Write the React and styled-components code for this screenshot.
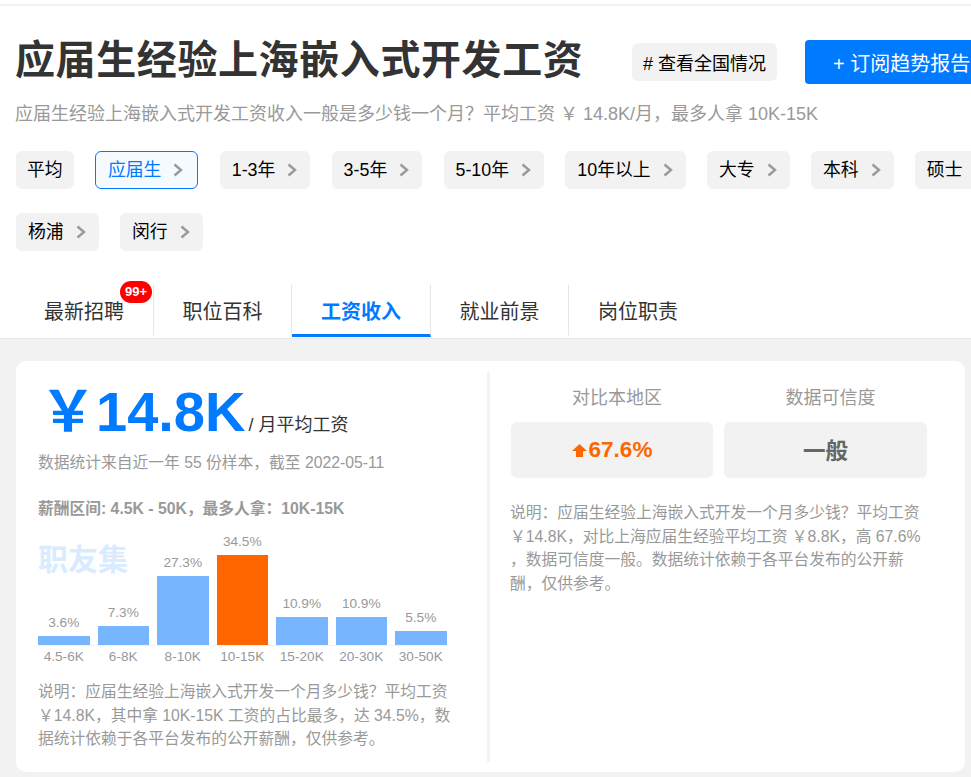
import React from "react";
import styled, { createGlobalStyle } from "styled-components";

const Global = createGlobalStyle`
  html, body {
    margin: 0;
    padding: 0;
    background: #fff;
    overflow: hidden;
    font-family: "Liberation Sans", "Noto Sans CJK SC", sans-serif;
  }
  * { box-sizing: border-box; }
`;

const Page = styled.div`
  width: 971px;
  height: 777px;
  overflow: hidden;
`;

const Header = styled.div`
  width: 1060px;
  height: 338px;
  padding: 4px 0 0 16px;
  background: #fff;
`;

const TopLine = styled.div`
  height: 2px;
  margin-left: -16px;
  background: #f2f2f2;
`;

const TitleRow = styled.div`
  display: flex;
  align-items: center;
  margin-top: 24px;
  height: 60px;
`;

const Title = styled.h1`
  margin: 0 0 0 -1px;
  width: 617px;
  font-size: 40px;
  line-height: 60px;
  font-weight: 700;
  letter-spacing: 0.6px;
  color: #333;
  white-space: nowrap;
`;

const AllLink = styled.a`
  display: flex;
  align-items: center;
  justify-content: center;
  width: 145px;
  height: 38px;
  margin-top: 4px;
  border-radius: 6px;
  background: #f2f2f2;
  color: #000;
  font-size: 18px;
`;

const SubButton = styled.a`
  display: flex;
  align-items: center;
  width: 190px;
  height: 44px;
  margin-left: 28px;
  margin-top: 4px;
  padding-left: 28px;
  border-radius: 4px;
  background: #007aff;
  color: #fff;
  font-size: 20px;
  white-space: nowrap;
`;

const Desc = styled.p`
  margin: 12px 0 0 -1px;
  font-size: 18px;
  line-height: 24px;
  color: #999;
  white-space: nowrap;
`;

const Filters = styled.div`
  display: flex;
  flex-wrap: wrap;
  gap: 24px 21.25px;
  margin-top: 25px;
  width: 1030px;
`;

const Chip = styled.a`
  display: flex;
  align-items: center;
  gap: 12px;
  height: 38px;
  padding: 0 ${(p) => (p.$plain ? 10 : p.$active ? 14 : 12)}px 0 ${(p) => (p.$plain ? 10 : p.$active ? 12 : 11)}px;
  border-radius: 6px;
  border: 1px solid ${(p) => (p.$active ? "#007aff" : "#f2f2f2")};
  background: ${(p) => (p.$active ? "#f5faff" : "#f2f2f2")};
  color: ${(p) => (p.$active ? "#007aff" : "#000")};
  font-size: 17.85px;
  white-space: nowrap;
`;

const ChipText = styled.span`
  margin-bottom: 5px;
`;

const Chevron = () => (
  <svg width="10" height="14" viewBox="0 0 10 14">
    <path d="M1.5 1.5L8 7l-6.5 5.5" fill="none" stroke="#999" strokeWidth="2.4" />
  </svg>
);

const Tabs = styled.div`
  display: flex;
  height: 52px;
  margin: 34px 0 0 -16px;
`;

const Tab = styled.a`
  position: relative;
  display: flex;
  align-items: center;
  justify-content: center;
  width: ${(p) => p.$w}px;
  padding: 1px 0 0 ${(p) => p.$pad || 0}px;
  border-right: 1px solid #e6e6e6;
  border-bottom: 3px solid ${(p) => (p.$active ? "#007aff" : "transparent")};
  color: ${(p) => (p.$active ? "#007aff" : "#333")};
  font-size: 20px;
  font-weight: ${(p) => (p.$active ? 700 : 400)};
  &:last-child { border-right: 0; }
`;

const Badge = styled.span`
  position: absolute;
  top: -4px;
  left: 120px;
  width: 32px;
  height: 22px;
  border-radius: 11px;
  background: #f00;
  color: #fff;
  font-size: 13px;
  font-weight: 700;
  line-height: 22px;
  text-align: center;
`;

const Body = styled.div`
  height: 439px;
  padding: 22px 6px 0 16px;
  background: #f2f2f2;
  border-top: 1px solid #e8e8e8;
`;

const Card = styled.div`
  display: flex;
  height: 411px;
  padding: 11px 0;
  border-radius: 10px;
  background: #fff;
`;

const Left = styled.div`
  position: relative;
  width: 474px;
  height: 390px;
  padding-left: 22px;
  border-right: 3px solid #f2f2f2;
`;

const Price = styled.div`
  display: flex;
  align-items: baseline;
  height: 70px;
  padding: 10px 0 0 2px;
`;

const Amount = styled.span`
  font-size: 56px;
  line-height: 60px;
  font-weight: 700;
  color: #007aff;
  white-space: nowrap;
`;

const Unit = styled.span`
  margin-left: 3px;
  font-size: 18px;
  color: #333;
`;

const Note = styled.p`
  margin: 9px 0 0;
  font-size: 15.75px;
  line-height: 24px;
  color: #999;
`;

const Range = styled.p`
  margin: 22px 0 0;
  font-size: 15.75px;
  line-height: 24px;
  font-weight: 700;
  color: #999;
`;

const Watermark = styled.div`
  position: absolute;
  left: 22px;
  top: 166px;
  font-size: 30px;
  line-height: 44px;
  font-weight: 700;
  color: #d9ebff;
`;

const Chart = styled.div`
  display: flex;
  align-items: flex-end;
  gap: 8px;
  width: 409px;
  height: 113px;
  margin-top: 12px;
  border-bottom: 1px solid #f2f2f2;
`;

const Col = styled.div`
  display: flex;
  flex-direction: column;
  align-items: center;
  width: 51.5px;
`;

const Pct = styled.span`
  font-size: 13.65px;
  line-height: 16px;
  margin-bottom: 5px;
  color: #999;
  white-space: nowrap;
`;

const Bar = styled.div`
  width: 100%;
  background: ${(p) => (p.$hot ? "#f60" : "#77b6ff")};
`;

const Axis = styled.div`
  display: flex;
  gap: 8px;
  width: 409px;
  margin-top: 2px;
`;

const AxisLabel = styled.span`
  width: 51.5px;
  font-size: 13.65px;
  line-height: 18px;
  color: #999;
  text-align: center;
  white-space: nowrap;
`;

const Explain = styled.p`
  width: ${(p) => p.$w}px;
  margin: ${(p) => p.$top}px 0 0;
  font-size: 15.75px;
  line-height: 23.7px;
  color: #999;
`;

const Right = styled.div`
  padding: 13px 0 0 21px;
`;

const Stats = styled.div`
  display: grid;
  grid-template-columns: 202px 203px;
  column-gap: 11px;
`;

const StatLabel = styled.div`
  padding-left: 10px;
  font-size: 18px;
  line-height: 26px;
  color: #999;
  text-align: center;
`;

const StatBox = styled.div`
  display: flex;
  align-items: center;
  justify-content: center;
  gap: 2px;
  height: 56px;
  margin-top: 11px;
  padding-bottom: ${(p) => (p.$cjk ? 3 : 0)}px;
  border-radius: 6px;
  background: #f2f2f2;
  color: ${(p) => p.$color};
  font-size: 22.5px;
  font-weight: 700;
`;

const ExplainRight = styled(Explain)`
  margin-left: -1px;
`;

const bars = [
  ["4.5-6K", 3.6, 9],
  ["6-8K", 7.3, 19],
  ["8-10K", 27.3, 69],
  ["10-15K", 34.5, 90],
  ["15-20K", 10.9, 28],
  ["20-30K", 10.9, 28],
  ["30-50K", 5.5, 14],
];

const filters = ["应届生", "1-3年", "3-5年", "5-10年", "10年以上", "大专", "本科", "硕士", "杨浦", "闵行"];

export default function App() {
  return (
    <Page>
      <Global />
      <Header>
        <TopLine />
        <TitleRow>
          <Title>应届生经验上海嵌入式开发工资</Title>
          <AllLink># 查看全国情况</AllLink>
          <SubButton>+ 订阅趋势报告</SubButton>
        </TitleRow>
        <Desc>应届生经验上海嵌入式开发工资收入一般是多少钱一个月？平均工资 ￥ 14.8K/月，最多人拿 10K-15K</Desc>
        <Filters>
          <Chip $plain><ChipText>平均</ChipText></Chip>
          {filters.map((f, i) => (
            <Chip key={f} $active={i === 0}>
              <ChipText>{f}</ChipText>
              <Chevron />
            </Chip>
          ))}
        </Filters>
        <Tabs>
          <Tab $w={154} $pad={15}>
            最新招聘
            <Badge>99+</Badge>
          </Tab>
          <Tab $w={138}>职位百科</Tab>
          <Tab $w={139} $active>工资收入</Tab>
          <Tab $w={138}>就业前景</Tab>
          <Tab $w={138}>岗位职责</Tab>
        </Tabs>
      </Header>
      <Body>
        <Card>
          <Left>
            <Price>
              <Amount>￥14.8K</Amount>
              <Unit>/ 月平均工资</Unit>
            </Price>
            <Note>数据统计来自近一年 55 份样本，截至 2022-05-11</Note>
            <Range>薪酬区间: 4.5K - 50K，最多人拿：10K-15K</Range>
            <Watermark>职友集</Watermark>
            <Chart>
              {bars.map(([label, v, h]) => (
                <Col key={label}>
                  <Pct>{v}%</Pct>
                  <Bar $hot={v === 34.5} style={{ height: h }} />
                </Col>
              ))}
            </Chart>
            <Axis>
              {bars.map(([label]) => (
                <AxisLabel key={label}>{label}</AxisLabel>
              ))}
            </Axis>
            <Explain $w={416} $top={14}>
              说明：应届生经验上海嵌入式开发一个月多少钱？平均工资 ￥14.8K，其中拿 10K-15K 工资的占比最多，达 34.5%，数据统计依赖于各平台发布的公开薪酬，仅供参考。
            </Explain>
          </Left>
          <Right>
            <Stats>
              <StatLabel>对比本地区</StatLabel>
              <StatLabel>数据可信度</StatLabel>
              <StatBox $color="#f60">
                <svg width="15" height="14" viewBox="0 0 15 14">
                  <path d="M7.5 1L15 8h-4v6H4V8H0z" fill="#f60" />
                </svg>
                67.6%
              </StatBox>
              <StatBox $color="#666" $cjk>一般</StatBox>
            </Stats>
            <ExplainRight $w={416} $top={23}>
              说明：应届生经验上海嵌入式开发一个月多少钱？平均工资 ￥14.8K，对比上海应届生经验平均工资 ￥8.8K，高 67.6% ，数据可信度一般。数据统计依赖于各平台发布的公开薪酬，仅供参考。
            </ExplainRight>
          </Right>
        </Card>
      </Body>
    </Page>
  );
}
